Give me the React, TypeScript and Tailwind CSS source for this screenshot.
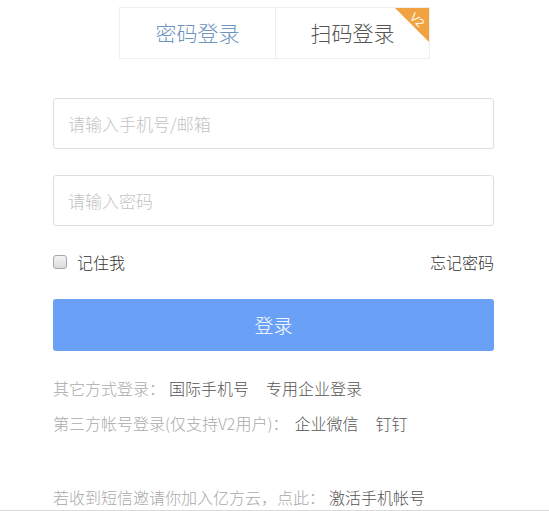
import { useState } from 'react';

export default function App() {
  const [tab, setTab] = useState<'pwd' | 'qr'>('pwd');

  return (
    <div className="w-[549px] h-[511px] overflow-hidden bg-white border-b border-[#d9d9d9] font-['Noto_Sans_CJK_SC',sans-serif] font-light">
      {/* Tabs */}
      <div className="flex justify-center pt-[7px]">
        <div className="relative flex w-[311px] h-[52px] border border-[#eeeeee] overflow-hidden">
          <button
            onClick={() => setTab('pwd')}
            className={`w-[156px] h-full text-[21px] font-light border-r border-[#eeeeee] ${tab === 'pwd' ? 'text-[#6d93bf]' : 'text-[#555]'}`}
          >
            密码登录
          </button>
          <button
            onClick={() => setTab('qr')}
            className={`flex-1 h-full text-[21px] font-light ${tab === 'qr' ? 'text-[#6d93bf]' : 'text-[#555]'}`}
          >
            扫码登录
          </button>
          {/* V2 corner badge */}
          <svg className="absolute top-0 right-0" width="36" height="36" viewBox="0 0 36 36">
            <polygon points="2,0 36,0 36,34" fill="#f0a340" />
            <text
              x="24"
              y="16"
              fontSize="12"
              fill="#fff"
              textAnchor="middle"
              transform="rotate(45 24 12)"
              fontFamily="Liberation Sans, sans-serif"
            >
              V2
            </text>
          </svg>
        </div>
      </div>

      {/* Form */}
      <div className="px-[53px] pt-[39px]">
        <input
          placeholder="请输入手机号/邮箱"
          className="w-[441px] h-[51px] px-[14px] text-[17px] font-light text-[#333] border border-[#dedede] rounded-[3px] outline-none placeholder:text-[#c3c3c3]"
        />
        <input
          type="password"
          placeholder="请输入密码"
          className="mt-[26px] w-[441px] h-[51px] px-[14px] text-[17px] font-light text-[#333] border border-[#dedede] rounded-[3px] outline-none placeholder:text-[#c3c3c3]"
        />

        <div className="flex items-center justify-between w-[441px] mt-[22px] h-[28px] text-[16px] text-[#333]">
          <label className="flex items-center gap-[10px]">
            <input
              type="checkbox"
              className="appearance-none w-[14px] h-[14px] rounded-[3px] border border-[#a6a6a6] bg-gradient-to-b from-[#f4f4f4] to-[#dcdcdc] checked:bg-[#6aa1f7]"
            />
            <span>记住我</span>
          </label>
          <a className="text-[#333] cursor-pointer">忘记密码</a>
        </div>

        <button className="mt-[23px] w-[441px] h-[52px] rounded-[3px] bg-[#6aa1f7] text-white text-[19px] font-light">
          登录
        </button>

        <div className="mt-[25px] text-[16px] leading-[24px] text-[#aaa]">
          <p>
            其它方式登录：
            <a className="ml-[4px] text-[#555] cursor-pointer">国际手机号</a>
            <a className="ml-[17px] text-[#555] cursor-pointer">专用企业登录</a>
          </p>
          <p className="mt-[11px]">
            第三方帐号登录(仅支持V2用户)：
            <a className="ml-[6px] text-[#555] cursor-pointer">企业微信</a>
            <a className="ml-[17px] text-[#555] cursor-pointer">钉钉</a>
          </p>
          <p className="mt-[50px]">
            若收到短信邀请你加入亿方云，点此：
            <a className="ml-[4px] text-[#555] cursor-pointer">激活手机帐号</a>
          </p>
        </div>
      </div>
    </div>
  );
}
